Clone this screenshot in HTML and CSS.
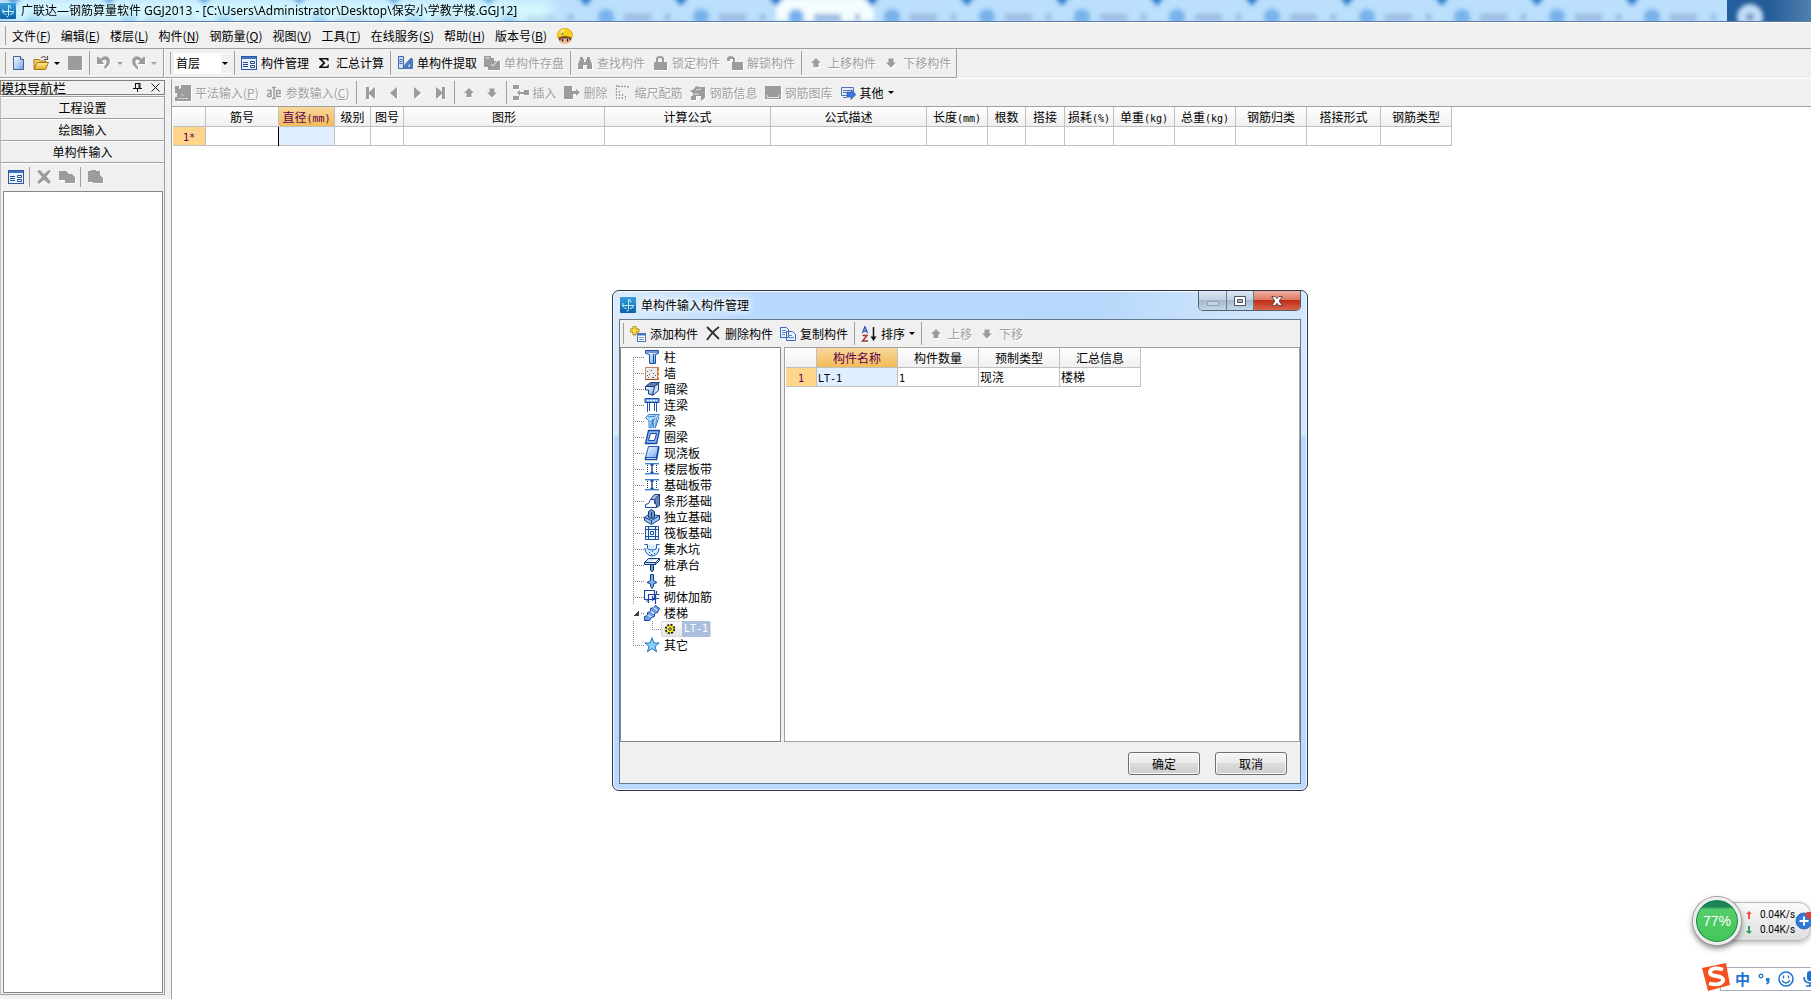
FILE: index.html
```html
<!DOCTYPE html>
<html lang="zh-CN">
<head>
<meta charset="utf-8">
<title>广联达—钢筋算量软件 GGJ2013</title>
<link rel="stylesheet" href="styles.css">
</head>
<body>
<svg class="defs" aria-hidden="true">
  <defs>
    <linearGradient id="g-blue" x1="0" y1="0" x2="1" y2="1"><stop offset="0" stop-color="#fff"/><stop offset="1" stop-color="#6ea3ec"/></linearGradient>
    <linearGradient id="g-app" x1="0" y1="0" x2="0" y2="1"><stop offset="0" stop-color="#38a0dc"/><stop offset="1" stop-color="#0a5fa4"/></linearGradient>
    <linearGradient id="g-fold" x1="0" y1="0" x2="0" y2="1"><stop offset="0" stop-color="#fff0a0"/><stop offset="1" stop-color="#e8a820"/></linearGradient>
  </defs>
  <symbol id="app" viewBox="0 0 16 16"><rect width="16" height="16" rx="1" fill="url(#g-app)"/><path d="M8.500 2.500v10q0 1.500-2 1.500M2 8.500h12M8.500 2.500q2.500 0 2.500 3M3 6q-1 5 3.500 5.500M13.500 8.500q0 3-3.500 3" fill="none" stroke="#c8eeff"/></symbol>
  <symbol id="new" viewBox="0 0 16 16"><path d="M3.500 1.500h7l3 3v10h-10z" fill="url(#g-blue)" stroke="#47618c"/><path d="M10.500 1.500v3h3" fill="#dce8fa" stroke="#47618c"/></symbol>
  <symbol id="open" viewBox="0 0 16 16"><path d="M1 13.500v-9h5l1 1.500h6v2" fill="#f8cf62" stroke="#a87416"/><path d="M1 14.500l3-7h11.500l-3 7z" fill="url(#g-fold)" stroke="#a87416"/><path d="M8 3q3-3 5 0M14.500 1v3.500H11" fill="none" stroke="#555" stroke-width="1.200"/></symbol>
  <symbol id="save" viewBox="0 0 16 16"><rect x="1" y="1" width="14" height="14" fill="#9c9c9c"/></symbol>
  <symbol id="undo" viewBox="0 0 16 16"><path d="M1 2h2l1 2q4-4 8-2 4 4 0 9l-3 3-1-2q4-4 2-7-2-1-4 1l2 3H1z" fill="#9c9c9c"/></symbol>
  <symbol id="redo" viewBox="0 0 16 16"><path d="M15 2h-2l-1 2Q8 0 4 2 0 6 4 11l4 4v-3Q4 8 6 5q2-1 4 1L8 9h7z" fill="#9c9c9c"/></symbol>
  <symbol id="manage" viewBox="0 0 16 16"><rect x=".5" y="1.500" width="15" height="13" fill="#e8f1ff" stroke="#2d5a9e"/><path d="M1 3h14" stroke="#3f74c4" stroke-width="2"/><path d="M2 7.500h5M2 9.500h5M2 11.500h5" stroke="#234b8c"/><path d="M9.500 6.500h4v2h-4zM9.500 10.500h4v2h-4z" fill="#fff" stroke="#234b8c"/></symbol>
  <symbol id="sigma" viewBox="0 0 16 16"><path d="M3 3h9.500v3h-1q0-1.500-1.500-1.500H6L9.500 8 6 11.500h4.500q1 0 1.500-2h1L12.500 13H3v-1l4-4-4-4z" fill="#111"/></symbol>
  <symbol id="extract" viewBox="0 0 16 16"><path d="M1.500 1.500h5v12h-5z" fill="#cfe0f8" stroke="#3b66a8"/><path d="M2.500 4.500h3M2.500 6.500h3M2.500 8.500h3" stroke="#3b66a8"/><path d="M7 13.500l1-4L14 3l1.500 1v9.500zM10 12h3.500V7.500z" fill="#4a80d0" fill-rule="evenodd" stroke="#234b8c" stroke-width=".6"/></symbol>
  <symbol id="store" viewBox="0 0 16 16"><path d="M0 1h7v2h3v3h6v9H4v-3H0z" fill="#9c9c9c"/><path d="M1.500 3h4M7 9l2 2 4-5" fill="none" stroke="#f0f0f0"/></symbol>
  <symbol id="find" viewBox="0 0 16 16"><path d="M3 2h3v2h1v3h2V4h1V2h3v2l2 5v5h-5v-4H6v4H1V9l2-5z" fill="#9c9c9c"/></symbol>
  <symbol id="lock" viewBox="0 0 16 16"><path d="M2 7h2V4q0-3 4-3t4 3v3h3v8H2zM6 7h4V4.500Q10 3 8 3T6 4.500z" fill="#9c9c9c" fill-rule="evenodd"/></symbol>
  <symbol id="unlock" viewBox="0 0 16 16"><path d="M0 6V3q1-2 3.500-2T8 3v4h8v8H5V7h1V4H3v2z" fill="#9c9c9c"/></symbol>
  <symbol id="up" viewBox="0 0 16 16"><path d="M8 3l5 5h-2.500v4h-5V8H3z" fill="#9c9c9c"/></symbol>
  <symbol id="down" viewBox="0 0 16 16"><path d="M8 12.500l5-5h-2.500v-4h-5v4H3z" fill="#9c9c9c"/></symbol>
  <symbol id="flat" viewBox="0 0 16 16"><path d="M0 1h4v3l2-1V0h10v16H0v-4h2V8H0z" fill="#9c9c9c"/><path d="M3 13.500h10M6 9l3 2" stroke="#d0d0d0"/></symbol>
  <symbol id="param" viewBox="0 0 16 16"><path d="M1 5.500h4v6H2q-2-2.500 3-3.500M15 8.500h-4.500v-3H14v3M10.500 8.500v3H15M6 2.500h1.500l.5 1 .5-1H10M8 3v10M6 13.500h1.500l.5-1 .5 1H10" fill="none" stroke="#9c9c9c" stroke-width="1.500"/></symbol>
  <symbol id="first" viewBox="0 0 16 16"><path d="M3 2h3v5l6-5v12L6 9v5H3z" fill="#9c9c9c"/></symbol>
  <symbol id="prev" viewBox="0 0 16 16"><path d="M11 2v12L4 8z" fill="#9c9c9c"/></symbol>
  <symbol id="next" viewBox="0 0 16 16"><path d="M5 2v12l7-6z" fill="#9c9c9c"/></symbol>
  <symbol id="last" viewBox="0 0 16 16"><path d="M13 2h-3v5L4 2v12l6-5v5h3z" fill="#9c9c9c"/></symbol>
  <symbol id="insert" viewBox="0 0 16 16"><path d="M0 0h6v4H0zM0 11h6v4H0zM11 5h5v5h-5zM4 7.500l3-2.500v2h4v2H7v2z" fill="#9c9c9c"/></symbol>
  <symbol id="remove" viewBox="0 0 16 16"><path d="M0 1h8v5h4V4l4 3.500-4 3.500V9H9v5H0z" fill="#9c9c9c"/></symbol>
  <symbol id="scale" viewBox="0 0 16 16"><path d="M3 1.500h10M1.500 3v12M4.500 6v9M7.500 9v6M10.500 11v4M13 1v3M1 1h3" fill="none" stroke="#9c9c9c" stroke-width="1.300" stroke-dasharray="2 1"/></symbol>
  <symbol id="info" viewBox="0 0 16 16"><path d="M0 6l4-2 2-3 3 1h6v11l-4 3V11H6v4H1v-4h2V8z" fill="#9c9c9c"/><path d="M6 5l5-1M4 9h5" stroke="#e4e4e4"/></symbol>
  <symbol id="lib" viewBox="0 0 16 16"><path d="M0 1h16v13H0z" fill="#9c9c9c"/><path d="M2 12.500h12M2 10v2M14 10v2" stroke="#e4e4e4"/></symbol>
  <symbol id="other" viewBox="0 0 16 16"><path d="M1.500 2.500h12v8h-12z" fill="#e4eefc" stroke="#5575a8"/><path d="M3 5.500h7M3 7.500h4M3 12.500h4" stroke="#5575a8"/><path d="M7 7h4V4.500l5 5-5 5V12H7z" fill="#3e78dc" stroke="#1e4ca0" stroke-width=".6"/></symbol>
  <symbol id="x" viewBox="0 0 16 16"><path d="M1 2l3-1 4 4 5-4 2 1-4.500 5.500L15 13l-2 2-5-4-5 4-2-2 5-5z" fill="#9c9c9c"/></symbol>
  <symbol id="copyoff" viewBox="0 0 16 16"><path d="M0 2h7l3 3h3l3 3v6H6v-3H0z" fill="#9c9c9c"/></symbol>
  <symbol id="pasteoff" viewBox="0 0 16 16"><path d="M1 2h3V1h5v1h4v4l3 3v5H6v-1H1z" fill="#9c9c9c"/></symbol>
  <symbol id="worker" viewBox="0 0 16 16"><path d="M2 8h12v5q-2 3-6 3t-6-3z" fill="#f0bc98"/><path d="M1.500 8h13v3l-1.500 2-1-2.500H4L3 13l-1.500-2z" fill="#6c3c28"/><path d="M5.500 11v2.500M10.500 11v2.500" stroke="#202020" stroke-width="1.400"/><path d="M0 9Q0 1 8 0q7 1 8 8l-2 1.500q-6-3-12 0z" fill="#f8d01c" stroke="#b08400" stroke-width=".5"/><path d="M4 4.500l3-3" stroke="#fff8b0" stroke-width="1.500"/><circle cx="5.500" cy="6" r="1" fill="#3c8cd8"/></symbol>
  <symbol id="add" viewBox="0 0 16 16"><path d="M3 0h3v3h3v3H6v3H3V6H0V3h3z" fill="#fbe03c" stroke="#977400" stroke-width=".8"/><rect x="7.500" y="7.500" width="8" height="8" fill="#fff" stroke="#4a78bc"/><path d="M8 8.500h7" stroke="#3f74c4" stroke-width="2"/><path d="M9 11.500h5M9 13.500h5" stroke="#7a9cc8"/></symbol>
  <symbol id="del" viewBox="0 0 16 16"><path d="M2 1q5 5 12 12M14 1Q8 5 2 14" fill="none" stroke="#303030" stroke-width="1.800"/></symbol>
  <symbol id="copy" viewBox="0 0 16 16"><path d="M.5 1.500h6l2 2v8h-8zM6.500 5.500h6l3 3v6h-9z" fill="#eaf2ff" stroke="#3c6cb8"/><path d="M2 4.500h4M2 6.500h4M2 8.500h3M8 9.500h4M8 11.500h6" stroke="#5a88cc"/></symbol>
  <symbol id="sort" viewBox="0 0 16 16"><path d="M1.500 7L4 .5 6.500 7M2.500 5h3" fill="none" stroke="#2c5cb0" stroke-width="1.300"/><path d="M1.500 9.500H6L1.500 15H7" fill="none" stroke="#a83030" stroke-width="1.400"/><path d="M12.500 1v11" stroke="#111" stroke-width="1.500"/><path d="M9.500 10.500h6l-3 4.500z" fill="#111"/></symbol>

  <symbol id="t-col" viewBox="0 0 16 16"><path d="M1.500 1.500h13v3l-3 1v9h-6v-9l-4-1z" fill="url(#g-blue)" stroke="#1c50a4"/><path d="M1.500 3h13M9.500 5v9" stroke="#1c50a4"/></symbol>
  <symbol id="t-wall" viewBox="0 0 16 16"><rect x="1.500" y="2.500" width="12" height="12" fill="#ececec" stroke="#c08868"/><path d="M1 14.500h14" stroke="#a04818"/><path d="M3 6.500h1M7 5.500h1M5 9.500h1M9 8.500h1M4 12.500h1M8 12.500h2M11 10.500h1M3 10.500h1" stroke="#555"/><path d="M14 2v4M14 7.500v3M14 12v3" stroke="#e07828" stroke-width="2"/></symbol>
  <symbol id="t-dark" viewBox="0 0 16 16"><path d="M1.500 5.500l5-4h9l-5 4z" fill="#5c7cac" stroke="#1c3c7c"/><path d="M1.500 5.500h9v3L8.500 14l-4-1v-4h-3z" fill="url(#g-blue)" stroke="#1c3c7c"/><path d="M10.500 5.500l4-3v7l-6 5z" fill="#cfe0f6" stroke="#1c3c7c"/></symbol>
  <symbol id="t-link" viewBox="0 0 16 16"><path d="M1 1.500h14v4H1z" fill="#7ba8e8" stroke="#1848a4"/><path d="M3 3.500h10" stroke="#fff" stroke-dasharray="2 1"/><path d="M3.500 6v9M5.500 6v8M10.500 6v8M12.500 6v9" stroke="#1c58b8"/></symbol>
  <symbol id="t-beam" viewBox="0 0 16 16"><path d="M1.500 4.500L5 1.500h10.500l-3 4-1 9h-2l-.5-8-1 8h-3V8z" fill="#bfe0fa" stroke="#2e84cc"/><path d="M4 4l8-1M6 13l5-8M6 9l4-3M12 13l3-9" stroke="#2e84cc"/></symbol>
  <symbol id="t-ring" viewBox="0 0 16 16"><path d="M4.500 1.500h11l-3 13h-11z" fill="#8ab8f0" stroke="#1848a4" stroke-width="1.300"/><path d="M6.500 4.500h6l-2 7h-6z" fill="#fff" stroke="#1848a4"/></symbol>
  <symbol id="t-slab" viewBox="0 0 16 16"><path d="M4.500 1.500h10l-2 11h-11z" fill="url(#g-blue)" stroke="#1c58b8"/><path d="M1.500 12.500v2h11l2.500-13" fill="none" stroke="#1848a4" stroke-width="1.500"/></symbol>
  <symbol id="t-band" viewBox="0 0 16 16"><path d="M1 2.500h14M1 12.500h14" stroke="#3c80d0"/><path d="M1 13.500h14" stroke="#a8ccf4"/><path d="M1 3.500h14" stroke="#a8ccf4"/><path d="M8 3v9M6.500 4h3M6.500 11.500h3" stroke="#123c8c" stroke-width="1.300"/><path d="M3.500 4v8M12.500 4v8" stroke="#333" stroke-dasharray="1 1"/></symbol>
  <symbol id="t-strip" viewBox="0 0 16 16"><path d="M6.500 6.500l4-5h5l-4 5z" fill="#a8c0e0" stroke="#1c3c7c"/><path d="M15.500 1.500v11l-3 2-2-8z" fill="#6888b8" stroke="#1c3c7c"/><path d="M6.500 6.500h4v4l2 1v3h-11v-3l3-1z" fill="#fff" stroke="#1848a4"/></symbol>
  <symbol id="t-iso" viewBox="0 0 16 16"><path d="M.5 8.500l4-3 11 1v4l-8 5-7-4z" fill="#9cc4f0" stroke="#123c7c"/><path d="M.5 8.500l7 3 8-5M7.500 11.500v3" fill="none" stroke="#123c7c"/><path d="M4.500 2.500l3-2 3 2v6l-3 1-3-1zM7.500 3v6" fill="#7098c8" stroke="#123c7c"/></symbol>
  <symbol id="t-raft" viewBox="0 0 16 16"><path d="M1.500 1.500h13v13h-13zM4.500 1v14M11.500 1v14M1 4.500h14M1 11.500h14M6.500 6.500h3v3h-3z" fill="#eaf4ff" stroke="#1c509c"/></symbol>
  <symbol id="t-pit" viewBox="0 0 16 16"><path d="M.5 3.500h3v4q1 1.500 4.500 1.500t4.500-1.500v-4h3M1 7q0 7 7 8 7-1 7-8" fill="#d8ecff" stroke="#1c5cac"/><path d="M5 11.500h1M8 10.500h1M10 12.500h1M7 13.500h1" stroke="#1c5cac"/></symbol>
  <symbol id="t-cap" viewBox="0 0 16 16"><path d="M.5 5.500l4-4h11l-4 4zM.5 5.500v2h11l4-4v-2M11.500 5.500v2" fill="#c8dffa" stroke="#123c7c"/><path d="M6.500 8v5l1.500 2 1.500-2V8" fill="#6c9cd8" stroke="#123c7c"/></symbol>
  <symbol id="t-pile" viewBox="0 0 16 16"><path d="M6.500 1.500h3v6l3.500 2-3.500 1.500v2L8 15.500l-1.500-2.500v-2L3 9.500l3.500-2z" fill="#7cb0ec" stroke="#123c7c"/></symbol>
  <symbol id="t-rebar" viewBox="0 0 16 16"><path d="M.5 1.500h10v9H.5zM4.500 14V5.500h11M8.500 12V7M11.500 15V5M2 12h3M8 9.500h7M12.500 2v3" fill="none" stroke="#1c44a8" stroke-width="1.200"/></symbol>
  <symbol id="t-stair" viewBox="0 0 16 16"><path d="M.5 11.500l3-1v-3l3-1v-3l3-1 2-2 4 3-2 4-3 1v3l-3 1-2 3h-5z" fill="#6ca0e8" stroke="#12449c"/><path d="M3.500 10.500l4 1M6.500 6.500l4 2M9.500 2.500l4 3" stroke="#fff"/></symbol>
  <symbol id="t-gear" viewBox="0 0 16 16"><circle cx="8" cy="8" r="4.200" fill="#e8e020" stroke="#222" stroke-width="2" stroke-dasharray="2 1.300"/><circle cx="8" cy="8" r="3.200" fill="#f4ec20"/><circle cx="8" cy="8" r="1.300" fill="#fff" stroke="#333"/></symbol>
  <symbol id="t-star" viewBox="0 0 16 16"><path d="M8 .8l1.900 5.200h5.300l-4.200 3.400 1.600 5.400L8 11.600l-4.600 3.200L5 9.400.8 6h5.300z" fill="#8cd0f8" stroke="#1c78c8"/></symbol>
</svg>

<header class="titlebar">
  <svg class="aero" viewBox="0 0 1811 21" preserveAspectRatio="none" aria-hidden="true">
    <defs>
      <filter id="soft" x="-5%" y="-50%" width="110%" height="200%"><feGaussianBlur stdDeviation="2"/></filter>
      <filter id="wide" x="-10%" y="-100%" width="120%" height="300%"><feGaussianBlur stdDeviation="7"/></filter>
      <linearGradient id="g-end"><stop offset="0" stop-color="#23609f"/><stop offset=".5" stop-color="#245c98"/><stop offset="1" stop-color="#5080b0"/></linearGradient>
      <g id="tab"><path d="M-8 -4h16L0 6z" fill="#2f7cc8"/><circle cx="20" cy="17" r="8" fill="#78b2ea"/><rect x="38" y="14" width="27" height="7" fill="#9dbce2"/><rect x="79" y="14" width="5" height="6" fill="#96b6de"/></g>
    </defs>
    <rect width="1811" height="21" fill="#bbdffd"/>
    <rect x="1727" width="84" height="21" fill="url(#g-end)"/>
    <g filter="url(#soft)">
      <path d="M776 21V8l10-10h76l12 12v11z" fill="#f4fdff"/>
      <use href="#tab" x="14"/><use href="#tab" x="109"/><use href="#tab" x="204"/><use href="#tab" x="299"/><use href="#tab" x="394"/><use href="#tab" x="489"/><use href="#tab" x="586"/><use href="#tab" x="681"/><use href="#tab" x="776"/><use href="#tab" x="872"/><use href="#tab" x="967"/><use href="#tab" x="1062"/><use href="#tab" x="1157"/><use href="#tab" x="1252"/><use href="#tab" x="1347"/><use href="#tab" x="1442"/><use href="#tab" x="1537"/><use href="#tab" x="1632"/>
      <circle cx="1750" cy="17" r="13" fill="#c4dcf6"/><circle cx="1750" cy="17" r="4" fill="#6f9ac8"/>
    </g>
    <rect x="12" y="2" width="540" height="18" fill="#dcffff" opacity=".92" filter="url(#wide)"/>
  </svg>
  <svg class="ico"><use href="#app"/></svg>
  <h1>广联达—钢筋算量软件 GGJ2013 - [C:\Users\Administrator\Desktop\保安小学教学楼.GGJ12]</h1>
</header>

<nav class="menubar">
  <button>文件(<u>F</u>)</button><button>编辑(<u>E</u>)</button><button>楼层(<u>L</u>)</button><button>构件(<u>N</u>)</button><button>钢筋量(<u>Q</u>)</button><button>视图(<u>V</u>)</button><button>工具(<u>T</u>)</button><button>在线服务(<u>S</u>)</button><button>帮助(<u>H</u>)</button><button>版本号(<u>B</u>)</button>
  <button aria-label="助手"><svg class="ico"><use href="#worker"/></svg></button>
</nav>

<div class="bars">
  <div class="bar bar-file">
    <button aria-label="新建"><svg class="ico"><use href="#new"/></svg></button>
    <button aria-label="打开"><svg class="ico"><use href="#open"/></svg><i class="caret"></i></button>
    <button disabled aria-label="保存"><svg class="ico"><use href="#save"/></svg></button>
    <span class="sep"></span>
    <button disabled aria-label="撤销"><svg class="ico"><use href="#undo"/></svg><i class="caret"></i></button>
    <button disabled aria-label="恢复"><svg class="ico"><use href="#redo"/></svg><i class="caret"></i></button>
  </div>
  <div class="bar bar-main">
    <span class="floor"><select aria-label="楼层"><option>首层</option></select></span>
    <span class="sep"></span>
    <button><svg class="ico"><use href="#manage"/></svg>构件管理</button>
    <button><svg class="ico"><use href="#sigma"/></svg>汇总计算</button>
    <span class="sep"></span>
    <button><svg class="ico"><use href="#extract"/></svg>单构件提取</button>
    <button disabled><svg class="ico"><use href="#store"/></svg>单构件存盘</button>
    <span class="sep"></span>
    <button disabled><svg class="ico"><use href="#find"/></svg>查找构件</button>
    <button disabled><svg class="ico"><use href="#lock"/></svg>锁定构件</button>
    <button disabled><svg class="ico"><use href="#unlock"/></svg>解锁构件</button>
    <span class="sep"></span>
    <button disabled><svg class="ico"><use href="#up"/></svg>上移构件</button>
    <button disabled><svg class="ico"><use href="#down"/></svg>下移构件</button>
  </div>
</div>

<div class="work">
  <aside class="side">
    <div class="side-head"><h2>模块导航栏</h2>
      <button aria-label="固定"><svg viewBox="0 0 9 9"><path d="M2.500 0v5M6 0v5M2 .5h4.500M0 5.500h9M4.500 6v3M7 0v5" fill="none" stroke="#111"/></svg></button>
      <button aria-label="关闭"><svg viewBox="0 0 9 9"><path d="M.5.5l8 8M8.500.5l-8 8" stroke="#111"/></svg></button>
    </div>
    <button class="side-tab">工程设置</button>
    <button class="side-tab">绘图输入</button>
    <button class="side-tab">单构件输入</button>
    <div class="side-tools">
      <button aria-label="构件管理"><svg class="ico"><use href="#manage"/></svg></button>
      <span class="sep"></span>
      <button disabled aria-label="删除"><svg class="ico"><use href="#x"/></svg></button>
      <button disabled aria-label="复制"><svg class="ico"><use href="#copyoff"/></svg></button>
      <span class="sep"></span>
      <button disabled aria-label="粘贴"><svg class="ico"><use href="#pasteoff"/></svg></button>
    </div>
    <div class="side-body"><div class="side-list"></div></div>
  </aside>

  <main class="main">
    <div class="bar bar-edit">
      <button disabled><svg class="ico"><use href="#flat"/></svg><span>平法输入(<u>P</u>)</span></button>
      <button disabled><svg class="ico"><use href="#param"/></svg><span>参数输入(<u>C</u>)</span></button>
      <span class="sep"></span>
      <button disabled aria-label="首条"><svg class="ico"><use href="#first"/></svg></button>
      <button disabled aria-label="上一条"><svg class="ico"><use href="#prev"/></svg></button>
      <button disabled aria-label="下一条"><svg class="ico"><use href="#next"/></svg></button>
      <button disabled aria-label="末条"><svg class="ico"><use href="#last"/></svg></button>
      <span class="sep"></span>
      <button disabled aria-label="上移"><svg class="ico"><use href="#up"/></svg></button>
      <button disabled aria-label="下移"><svg class="ico"><use href="#down"/></svg></button>
      <span class="sep"></span>
      <button disabled><svg class="ico"><use href="#insert"/></svg>插入</button>
      <button disabled><svg class="ico"><use href="#remove"/></svg>删除</button>
      <button disabled><svg class="ico"><use href="#scale"/></svg>缩尺配筋</button>
      <button disabled><svg class="ico"><use href="#info"/></svg>钢筋信息</button>
      <button disabled><svg class="ico"><use href="#lib"/></svg>钢筋图库</button>
      <button><svg class="ico"><use href="#other"/></svg>其他<i class="caret"></i></button>
    </div>
    <div class="sheet">
      <table class="grid grid-bars">
        <colgroup><col class="w33"><col class="w73"><col class="w56"><col class="w36"><col class="w33"><col class="w201"><col class="w166"><col class="w156"><col class="w61"><col class="w38"><col class="w39"><col class="w49"><col class="w61"><col class="w61"><col class="w71"><col class="w74"><col class="w71"></colgroup>
        <thead><tr><th></th><th>筋号</th><th class="on">直径<span class="m">(mm)</span></th><th>级别</th><th>图号</th><th>图形</th><th>计算公式</th><th>公式描述</th><th>长度<span class="m">(mm)</span></th><th>根数</th><th>搭接</th><th>损耗<span class="m">(%)</span></th><th>单重<span class="m">(kg)</span></th><th>总重<span class="m">(kg)</span></th><th>钢筋归类</th><th>搭接形式</th><th>钢筋类型</th></tr></thead>
        <tbody><tr><th class="row"><span class="m">1*</span></th><td></td><td class="cur caret-cell"></td><td></td><td></td><td></td><td></td><td></td><td></td><td></td><td></td><td></td><td></td><td></td><td></td><td></td><td></td></tr></tbody>
      </table>
    </div>
  </main>
</div>

<section class="dialog" role="dialog" aria-labelledby="dlg-title">
  <div class="dlg-title">
    <svg class="ico"><use href="#app"/></svg>
    <h2 id="dlg-title">单构件输入构件管理</h2>
    <div class="winctl">
      <button class="min" disabled aria-label="最小化"><svg viewBox="0 0 12 12"><path d="M.5 6.500h11v4H.5z" fill="#c8d4e0" stroke="#8fa0b2"/></svg></button>
      <button class="max" aria-label="最大化"><svg viewBox="0 0 12 12"><path d="M.5 1.500h11v9H.5zM3.500 4.500h5v3h-5z" fill="#fff" fill-rule="evenodd" stroke="#4a5668"/></svg></button>
      <button class="close" aria-label="关闭"><svg viewBox="0 0 12 12"><path d="M.8 1.500h3.400L6 3.700l1.800-2.200h3.400L8.200 6l3 4.500H7.800L6 8.300l-1.800 2.200H.8l3-4.500z" fill="#fff" stroke="#5b4044" stroke-width=".9"/></svg></button>
    </div>
  </div>
  <div class="client">
    <div class="bar bar-dlg">
      <button><svg class="ico"><use href="#add"/></svg>添加构件</button>
      <button><svg class="ico"><use href="#del"/></svg>删除构件</button>
      <button><svg class="ico"><use href="#copy"/></svg>复制构件</button>
      <span class="sep"></span>
      <button><svg class="ico"><use href="#sort"/></svg>排序<i class="caret"></i></button>
      <span class="sep"></span>
      <button disabled><svg class="ico"><use href="#up"/></svg>上移</button>
      <button disabled><svg class="ico"><use href="#down"/></svg>下移</button>
    </div>
    <div class="panes">
      <ul class="tree">
        <li class="top"><i class="stem"></i><svg class="ico"><use href="#t-col"/></svg>柱</li>
        <li><i class="stem"></i><svg class="ico"><use href="#t-wall"/></svg>墙</li>
        <li><i class="stem"></i><svg class="ico"><use href="#t-dark"/></svg>暗梁</li>
        <li><i class="stem"></i><svg class="ico"><use href="#t-link"/></svg>连梁</li>
        <li><i class="stem"></i><svg class="ico"><use href="#t-beam"/></svg>梁</li>
        <li><i class="stem"></i><svg class="ico"><use href="#t-ring"/></svg>圈梁</li>
        <li><i class="stem"></i><svg class="ico"><use href="#t-slab"/></svg>现浇板</li>
        <li><i class="stem"></i><svg class="ico"><use href="#t-band"/></svg>楼层板带</li>
        <li><i class="stem"></i><svg class="ico"><use href="#t-band"/></svg>基础板带</li>
        <li><i class="stem"></i><svg class="ico"><use href="#t-strip"/></svg>条形基础</li>
        <li><i class="stem"></i><svg class="ico"><use href="#t-iso"/></svg>独立基础</li>
        <li><i class="stem"></i><svg class="ico"><use href="#t-raft"/></svg>筏板基础</li>
        <li><i class="stem"></i><svg class="ico"><use href="#t-pit"/></svg>集水坑</li>
        <li><i class="stem"></i><svg class="ico"><use href="#t-cap"/></svg>桩承台</li>
        <li><i class="stem"></i><svg class="ico"><use href="#t-pile"/></svg>桩</li>
        <li><i class="stem"></i><svg class="ico"><use href="#t-rebar"/></svg>砌体加筋</li>
        <li class="open"><i class="stem"></i><svg class="ico"><use href="#t-stair"/></svg>楼梯</li>
        <li class="child"><i class="stem"></i><i class="stem sub"></i><span class="pick"><svg class="ico"><use href="#t-gear"/></svg><span class="m">LT-1</span></span></li>
        <li class="end"><i class="stem"></i><svg class="ico"><use href="#t-star"/></svg>其它</li>
      </ul>
      <div class="pane">
        <table class="grid grid-parts">
          <colgroup><col class="w31"><col class="w81"><col class="w81"><col class="w81"><col class="w81"></colgroup>
          <thead><tr><th></th><th class="on">构件名称</th><th>构件数量</th><th>预制类型</th><th>汇总信息</th></tr></thead>
          <tbody><tr><th class="row"><span class="m">1</span></th><td class="cur"><span class="m">LT-1</span></td><td><span class="m">1</span></td><td>现浇</td><td>楼梯</td></tr></tbody>
        </table>
      </div>
    </div>
    <div class="dlg-foot"><button>确定</button><button>取消</button></div>
  </div>
</section>

<aside class="speed">
  <div class="pill">
    <p><svg viewBox="0 0 8 8"><path d="M4 0l3 3H5v5H3V3H1z" fill="#e85040"/></svg>0.04K/s</p>
    <p><svg viewBox="0 0 8 8"><path d="M4 8l3-3H5V0H3v5H1z" fill="#28a050"/></svg>0.04K/s</p>
  </div>
  <div class="ball">77%</div>
  <svg class="plus" viewBox="0 0 18 18"><circle cx="9" cy="9" r="8" fill="#2f7bd8" stroke="#3a68a8"/><path d="M9 4.500v9M4.500 9h9" stroke="#fff" stroke-width="2"/><circle cx="15" cy="3" r="4" fill="#e03c3c"/></svg>
</aside>

<aside class="ime">
  <svg class="sogou" viewBox="0 0 28 28"><path d="M0 5L24 0l4 22L6 28z" fill="#f4511e"/><path d="M21 6.500Q10 3.500 8 8.500q-1 3.500 6 4.500 8 1 7 5-3 5-14 2.500" fill="none" stroke="#fff" stroke-width="3.800"/></svg>
  <div class="ime-bar">
    <button>中</button>
    <svg class="punct" viewBox="0 0 12 12"><circle cx="3" cy="3" r="1.800" fill="none" stroke="#1e74cc" stroke-width="1.300"/><path d="M8 5h3.500v3q0 3-3 3.500l-.5-1q1.500-.5 1.500-2H8z" fill="#1e74cc"/></svg>
    <svg class="ico" viewBox="0 0 16 16"><circle cx="8" cy="8" r="7" fill="none" stroke="#1e74cc" stroke-width="1.600"/><path d="M5.500 4.500v3M10.500 4.500v3M4 9.500q4 5 8 0" fill="none" stroke="#1e74cc" stroke-width="1.400"/></svg>
    <svg class="ico" viewBox="0 0 16 16"><rect x="5" y="0" width="6" height="10" rx="3" fill="#1e74cc"/><path d="M2 6q0 6 6 6t6-6M8 12v3M4 15h8" fill="none" stroke="#1e74cc" stroke-width="1.600"/></svg>
  </div>
</aside>
</body>
</html>
```
FILE: styles.css
```css
* { box-sizing: border-box; }

body {
  margin: 0;
  height: 100vh;
  display: flex;
  flex-direction: column;
  overflow: hidden;
  position: relative;
  background: #f0f0f0;
  color: #000;
  font: 12px/16px "Noto Sans CJK SC", sans-serif;
}

h1, h2, p, ul { margin: 0; padding: 0; font: inherit; }

button {
  display: inline-flex;
  align-items: center;
  border: 0;
  padding: 0;
  background: none;
  color: inherit;
  font: inherit;
  white-space: nowrap;
}

u { text-underline-offset: 1px; }
.defs { position: absolute; width: 0; height: 0; }
.ico { width: 16px; height: 16px; flex: none; }
.m { font-family: "DejaVu Sans Mono", monospace; font-size: 10px; }

/* title bar */
.titlebar {
  position: relative;
  display: flex;
  align-items: center;
  gap: 5px;
  height: 22px;
  flex: none;
  border-bottom: 1px solid #5d7ba6;
}
.titlebar h1 {
  position: relative;
  font-family: "Noto Sans", "Noto Sans CJK SC", sans-serif;
  white-space: nowrap;
}
.titlebar .ico { position: relative; }
.titlebar .aero { position: absolute; inset: 0; width: 100%; height: 100%; }

/* menu */
.menubar {
  display: flex;
  align-items: center;
  gap: 10px;
  height: 27px;
  flex: none;
  padding-left: 7px;
  border-top: 1px solid #fff;
  border-bottom: 1px solid #a0a0a0;
}
.menubar::before, .bar-file::before, .bar-main::before, .bar-dlg::before {
  content: "";
  width: 1px;
  margin-right: 3px;
  align-self: stretch;
  margin-top: 3px;
  margin-bottom: 3px;
  background: #a0a0a0;
}
.menubar::before { margin-left: -2px; margin-right: -4px; }

/* tool bars */
.bars { display: flex; flex: none; height: 29px; }
.bar { display: flex; align-items: center; flex: none; }
.bar button { gap: 4px; padding: 0 4px 0 3px; }
.sep { width: 1px; align-self: stretch; margin: 2px 3px 2px 2px; background: #a0a0a0; flex: none; }
.caret {
  width: 0;
  border: 3px solid transparent;
  border-top-color: currentColor;
  border-bottom: 0;
}
button:disabled { color: #a0a0a0; text-shadow: 1px 1px #fff; }
button:disabled .ico { filter: drop-shadow(1px 1px 0 #fff); }

.bar-file {
  width: 164px;
  padding-left: 5px;
  border-right: 1px solid #a0a0a0;
  border-bottom: 1px solid #a0a0a0;
}
.bar-file::before { margin-right: 1px; }
.bar-file .caret { margin-left: 1px; }
.bar-main {
  padding-left: 5px;
  padding-right: 1px;
  border-left: 1px solid #fff;
  border-right: 1px solid #a0a0a0;
  border-bottom: 1px solid #a0a0a0;
}
.floor { position: relative; width: 56px; height: 21px; margin-right: 2px; }
.floor select {
  appearance: none;
  width: 100%;
  height: 100%;
  border: 0;
  padding: 0 0 0 2px;
  background: linear-gradient(#f0f0f0, #f0f0f0) right / 9px 19px no-repeat #fff;
  font: inherit;
}
.floor::after {
  content: "";
  position: absolute;
  right: 2px;
  top: 9px;
  border: 3px solid transparent;
  border-top-color: #000;
  border-bottom: 0;
}

/* work area */
.work { display: flex; flex: 1; min-height: 0; border-top: 1px solid #fff; }
.side {
  display: flex;
  flex-direction: column;
  width: 166px;
  flex: none;
  padding: 1px 1px 4px 0;
}
.side-head {
  display: flex;
  align-items: center;
  height: 15px;
  margin-bottom: 1px;
  border: 1px solid #808080;
  padding-right: 4px;
  font-size: 13px;
}
.side-head h2 { flex: 1; line-height: 13px; }
.side-head button { width: 9px; margin-left: 9px; }
.side-head svg { width: 9px; height: 9px; }
.side-tab, .side-tools {
  border: 1px solid #a0a0a0;
  border-bottom: 0;
  border-left-color: #c0c0c0;
  box-shadow: inset 0 1px #fff;
}
.side-tab { justify-content: center; height: 22px; }
.side-tools {
  display: flex;
  align-items: center;
  height: 29px;
  padding-left: 4px;
}
.side-tools button { padding: 0 4px 0 3px; }
.side-tools .sep { margin: 4px 3px 4px 1px; }
.side-body {
  flex: 1;
  display: flex;
  padding: 0 1px 1px 2px;
  border: 1px solid #a0a0a0;
  border-top: 0;
  border-left-color: #c0c0c0;
}
.side-list { flex: 1; border: 1px solid #828790; background: #fff; }

.main {
  flex: 1;
  min-width: 0;
  display: flex;
  flex-direction: column;
  margin-left: 5px;
  border-left: 1px solid #a0a0a0;
}
.bar-edit { height: 28px; border-bottom: 1px solid #a0a0a0; }
.sheet { flex: 1; background: #fff; padding-left: 1px; }

/* grids */
.grid { border-collapse: separate; border-spacing: 0; table-layout: fixed; width: 0; }
.grid th, .grid td {
  height: 19px;
  padding: 0 0 0 1px;
  border-right: 1px solid #c0c0c0;
  border-bottom: 1px solid #c0c0c0;
  font-weight: normal;
  line-height: 16px;
  white-space: nowrap;
  text-align: left;
}
.grid thead th { height: 20px; padding: 0; text-align: center; background: linear-gradient(#fff, #efefef); }
.grid .m { line-height: 12px; }
.grid thead .on { color: #5c0050; background: linear-gradient(#f9d79c, #f2bb5a); }
.grid .row { padding: 0; text-align: center; color: #5c0050; background: #ffd58c; }
.grid .cur { background: #e0efff; }
.grid .caret-cell { box-shadow: -1px 0 #000; }
.w31 { width: 31px; } .w33 { width: 33px; } .w36 { width: 36px; } .w38 { width: 38px; }
.w39 { width: 39px; } .w49 { width: 49px; } .w56 { width: 56px; } .w61 { width: 61px; }
.w71 { width: 71px; } .w73 { width: 73px; } .w74 { width: 74px; } .w81 { width: 81px; }
.w156 { width: 156px; } .w166 { width: 166px; } .w201 { width: 201px; }

/* dialog window */
.dialog {
  position: absolute;
  left: 612px;
  top: 290px;
  width: 696px;
  padding: 0 6px 6px;
  border: 1px solid #2c3644;
  border-radius: 7px;
  background: linear-gradient(100deg, #dcecfc 0, #b9dafc 140px, #b7d8fb 480px, #cfe5fc 620px, #d4e8fd) top / 100% 145px no-repeat #b9dafd;
  box-shadow: inset 0 0 0 1px #f4faff;
}
.dlg-title { display: flex; align-items: center; gap: 5px; height: 28px; padding-left: 1px; }
.dlg-title h2 { flex: 1; text-shadow: 0 0 6px #fff, 0 0 8px #fff, 0 0 10px #fff; }
.winctl {
  display: flex;
  align-self: flex-start;
  height: 20px;
  border: 1px solid #55606f;
  border-top: 0;
  border-radius: 0 0 5px 5px;
  overflow: hidden;
}
.winctl button { justify-content: center; width: 27px; background: linear-gradient(#dce8f4, #c0d0e2 48%, #a4b8ce 50%, #c4d8ec); }
.winctl button + button { border-left: 1px solid #6c7888; }
.winctl .close { width: 47px; background: linear-gradient(#efb0a4, #dc7664 48%, #c02c18 50%, #d8664c); }
.winctl svg { width: 12px; height: 12px; }
.client { border: 1px solid #66788c; background: #f0f0f0; }
.bar-dlg { height: 27px; padding-left: 3px; }
.panes { display: flex; gap: 3px; height: 395px; }
.tree {
  width: 161px;
  padding: 1px 0 0 12px;
  border: 1px solid #828790;
  background: #fff;
  list-style: none;
}
.tree li { display: flex; align-items: center; height: 16px; }
.tree li > .ico { margin-right: 4px; }
.stem {
  width: 11px;
  height: 16px;
  flex: none;
  background:
    repeating-linear-gradient(#808080 0 1px, #fff 1px 2px) 0 0 / 1px 16px no-repeat,
    repeating-linear-gradient(90deg, #808080 0 1px, #fff 1px 2px) 0 8px / 11px 1px no-repeat;
}
.top .stem { background-position: 0 8px, 0 8px; }
.end .stem { background-size: 1px 8px, 11px 1px; }
.open .stem {
  background: repeating-linear-gradient(90deg, #808080 0 1px, #fff 1px 2px) 8px 8px / 3px 1px no-repeat,
    linear-gradient(135deg, transparent 50%, #404040 50%) 0 5px / 6px 6px no-repeat;
}
.child .stem { background-size: 1px 16px, 0 0; margin-right: 8px; }
.child .sub { background-size: 1px 8px, 9px 1px; width: 9px; margin-right: 0; }
.pick {
  display: flex;
  align-items: center;
  gap: 4px;
  height: 16px;
  border: 1px solid #d8d8d8;
  border-radius: 2px;
  background: linear-gradient(#fafafa, #e4e4e4);
}
.pick .m { height: 16px; padding: 0 2px; background: #aabfe0; color: #fff; }
.pane { flex: 1; padding-left: 1px; border: 1px solid #a0a0a0; background: #fff; }
.dlg-foot { display: flex; justify-content: flex-end; gap: 15px; padding: 10px 13px 8px; }
.dlg-foot button {
  justify-content: center;
  width: 72px;
  height: 23px;
  border: 1px solid #707070;
  border-radius: 3px;
  background: linear-gradient(#f4f4f4, #ebebeb 50%, #dcdcdc 50%, #cfcfcf);
  box-shadow: inset 0 0 0 1px #fafafa;
}

/* network monitor */
.speed { position: absolute; right: 0; top: 897px; width: 118px; height: 50px; }
.pill {
  position: absolute;
  inset: 5px 0 6px 22px;
  padding: 4px 0 0 29px;
  border: 1px solid #b8b8b8;
  border-radius: 4px 12px 12px 4px;
  background: linear-gradient(#fafafa, #dedede);
  box-shadow: 0 2px 5px #0004;
}
.pill p { display: flex; align-items: center; gap: 7px; height: 15px; font: 10px/15px Roboto, sans-serif; }
.pill svg { width: 8px; height: 8px; }
.ball {
  position: absolute;
  left: 0;
  top: 0;
  width: 48px;
  height: 48px;
  border: 3px solid #eee;
  border-radius: 50%;
  background: linear-gradient(#1c8458 0 16%, #56cc6c 22%, #42c658);
  box-shadow: inset 0 0 0 1px #108048, 0 0 0 1px #999, 0 3px 6px #0008;
  color: #fff;
  font: 14px/42px "Liberation Sans", sans-serif;
  text-align: center;
}
.plus { position: absolute; right: -2px; top: 15px; width: 18px; height: 18px; }

/* input method bar */
.ime { position: absolute; right: 0; top: 963px; width: 109px; height: 28px; }
.sogou { position: absolute; left: 0; top: 0; width: 28px; height: 28px; }
.ime-bar {
  display: flex;
  align-items: center;
  gap: 8px;
  height: 24px;
  margin: 4px 0 0 18px;
  padding-left: 14px;
  border: 1px solid #a8b0c0;
  border-right: 0;
  background: #fff;
  overflow: hidden;
}
.ime-bar button { color: #1e74cc; font-size: 15px; font-weight: bold; }
.punct { width: 12px; height: 12px; flex: none; }
```
